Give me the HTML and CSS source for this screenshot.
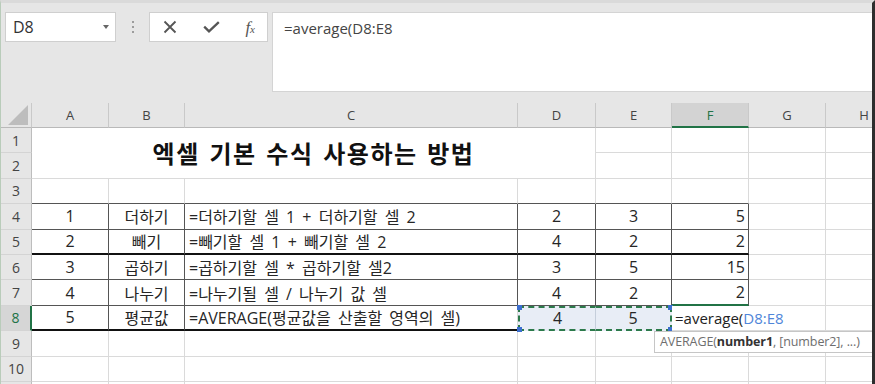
FILE: index.html
```html
<!doctype html>
<html lang="ko">
<head>
    <meta charset="UTF-8">
    <title>엑셀 기본 수식 사용하는 방법</title>
    <link rel="stylesheet" href="styles.css">
</head>
<body>

<div class="app">
    <!-- 수식 입력줄 -->
    <div class="bar">
        <div class="namebox"><span>D8</span><i class="caret"></i></div>
        <div class="grip"><i></i><i></i><i></i></div>
        <div class="btns">
            <svg width="14" height="14" viewBox="0 0 14 14"><path d="M1.5 1.5L12.5 12.5M12.5 1.5L1.5 12.5" stroke="#555" stroke-width="1.8" fill="none"/></svg>
            <svg width="17" height="12" viewBox="0 0 17 12"><path d="M1.2 5.6L6 10.4L15.8 1.2" stroke="#555" stroke-width="2.3" fill="none"/></svg>
            <span class="fx">f<sub>x</sub></span>
        </div>
        <div class="formula">=average(D8:E8</div>
    </div>

    <!-- 시트 -->
    <div class="sheet">
        <div class="h corner"><i></i></div>
        <div class="h">A</div>
        <div class="h">B</div>
        <div class="h">C</div>
        <div class="h">D</div>
        <div class="h">E</div>
        <div class="h on">F</div>
        <div class="h">G</div>
        <div class="h">H</div>

        <div class="rh">1</div>
        <div class="c title">엑셀 기본 수식 사용하는 방법</div>
        <div class="c"></div><div class="c"></div><div class="c"></div><div class="c"></div>

        <div class="rh">2</div>
        <div class="c"></div><div class="c"></div><div class="c"></div><div class="c"></div>

        <div class="rh">3</div>
        <div class="c tt"></div><div class="c tt"></div><div class="c tt"></div><div class="c tt"></div><div class="c tt"></div><div class="c tt"></div>
        <div class="c"></div><div class="c"></div>

        <div class="rh">4</div>
        <div class="c t">1</div>
        <div class="c t">더하기</div>
        <div class="c t l">=더하기할 셀 1 + 더하기할 셀 2</div>
        <div class="c t">2</div>
        <div class="c t">3</div>
        <div class="c t r">5</div>
        <div class="c"></div><div class="c"></div>

        <div class="rh">5</div>
        <div class="c t tb">2</div>
        <div class="c t tb">빼기</div>
        <div class="c t tb l">=빼기할 셀 1 + 빼기할 셀 2</div>
        <div class="c t tb">4</div>
        <div class="c t tb">2</div>
        <div class="c t tb r">2</div>
        <div class="c"></div><div class="c"></div>

        <div class="rh">6</div>
        <div class="c t">3</div>
        <div class="c t">곱하기</div>
        <div class="c t l">=곱하기할 셀 * 곱하기할 셀2</div>
        <div class="c t">3</div>
        <div class="c t">5</div>
        <div class="c t r">15</div>
        <div class="c"></div><div class="c"></div>

        <div class="rh">7</div>
        <div class="c t">4</div>
        <div class="c t">나누기</div>
        <div class="c t l">=나누기될 셀 / 나누기 값 셀</div>
        <div class="c t">4</div>
        <div class="c t">2</div>
        <div class="c t r above">2</div>
        <div class="c"></div><div class="c"></div>

        <div class="rh on">8</div>
        <div class="c t tb">5</div>
        <div class="c t tb">평균값</div>
        <div class="c t tb l cut">=AVERAGE(평균값을 산출할 영역의 셀)</div>
        <div class="c sel sl">4</div>
        <div class="c sel sr">5</div>
        <div class="c edit"><span class="typing">=average(<span class="ref">D8:E8</span></span></div>
        <div class="c"></div><div class="c"></div>

        <div class="rh">9</div>
        <div class="c"></div><div class="c"></div><div class="c"></div><div class="c"></div><div class="c"></div><div class="c"></div><div class="c"></div><div class="c"></div>

        <div class="rh">10</div>
        <div class="c"></div><div class="c"></div><div class="c"></div><div class="c"></div><div class="c"></div><div class="c"></div><div class="c"></div><div class="c"></div>

        <div class="rh"></div>
        <div class="c"></div><div class="c"></div><div class="c"></div><div class="c"></div><div class="c"></div><div class="c"></div><div class="c"></div><div class="c"></div>
    </div>

    <div class="tip">AVERAGE(<b>number1</b>, [number2], ...)</div>
</div>

</body>
</html>
```

FILE: styles.css
```css
*{margin:0;padding:0;box-sizing:border-box;}
body{
    background:#e6e6e6;
    font-family:"Open Sans","Noto Sans CJK KR",sans-serif;
}
.app{
    position:relative;
    width:875px;
    height:384px;
    overflow:hidden;
    background:#e6e6e6;
    border-left:1px solid #b9ccba;
    border-right:3px solid #2e2e2e;
    border-top:3px solid #dadada;
}

/* 수식 입력줄 */
.bar{
    display:flex;
    align-items:flex-start;
    height:100px;
    padding:9px 0 0 4px;
}
.namebox{
    display:flex;
    align-items:center;
    justify-content:space-between;
    width:111px;
    height:30px;
    padding:0 6px 0 7px;
    background:#fff;
    border:1px solid #cfcfcf;
    font-size:16px;
    color:#333;
}
.caret{
    width:0;
    height:0;
    border-left:3.5px solid transparent;
    border-right:3.5px solid transparent;
    border-top:4px solid #666;
}
.grip{
    display:flex;
    flex-direction:column;
    align-items:center;
    gap:3px;
    width:33px;
    padding-top:9px;
}
.grip i{
    width:2px;
    height:2px;
    background:#9c9c9c;
}
.btns{
    display:flex;
    align-items:center;
    justify-content:space-between;
    width:119px;
    height:30px;
    padding:0 12px 0 13px;
    background:#fff;
    border:1px solid #cfcfcf;
}
.fx{
    font-family:"Liberation Serif",serif;
    font-style:italic;
    font-size:17px;
    color:#555;
    line-height:1;
}
.fx sub{
    font-size:11px;
    vertical-align:0;
}
.formula{
    flex:1;
    height:80px;
    margin-left:4px;
    padding:5px 11px;
    background:#fff;
    border:1px solid #d4d4d4;
    border-right:0;
    font-size:15px;
    line-height:20px;
    color:#444;
}

/* 시트 */
.sheet{
    display:grid;
    grid-template-columns:31px 77px 76px 333px 78px 76px 77px 77px 77px;
    grid-template-rows:25px repeat(11,25.4px);
}
.h{
    display:flex;
    align-items:center;
    justify-content:center;
    border-right:1px solid #c9c9c9;
    border-bottom:1px solid #b9b9b9;
    font-size:13px;
    color:#444;
}
.h.on{
    background:#d3d3d3;
    color:#217346;
    border-bottom:2px solid #217346;
}
.corner{
    justify-content:flex-end;
    align-items:flex-end;
    padding:0 3px 2px 0;
}
.corner i{
    width:0;
    height:0;
    border-left:20px solid transparent;
    border-bottom:20px solid #bdbdbd;
}
.rh{
    display:flex;
    align-items:center;
    justify-content:center;
    border-right:1px solid #bdbdbd;
    border-bottom:1px solid #d4d4d4;
    font-size:14px;
    color:#444;
}
.rh.on{
    background:#d6d6d6;
    color:#217346;
    border-right:2px solid #217346;
}
.c{
    display:flex;
    align-items:center;
    justify-content:center;
    padding:0 4px;
    background:#fff;
    border-right:1px solid #dadada;
    border-bottom:1px solid #dadada;
    font-family:"Open Sans","Noto Sans CJK KR",sans-serif;
    font-size:16px;
    word-spacing:3px;
    color:#262626;
    white-space:nowrap;
}
.c.l{justify-content:flex-start;}
.c.r{justify-content:flex-end;padding-right:3px;}
.title{
    grid-column:span 4;
    grid-row:span 2;
    font-size:24px;
    font-weight:bold;
    letter-spacing:1.5px;
    word-spacing:2px;
    color:#111;
}
.tt{border-bottom-color:#555;}
.t{
    border-right-color:#555;
    border-bottom-color:#555;
}
.tb{border-bottom:2px solid #111;}
.cut{border-right-color:#dadada;}
.above{border-bottom:2px solid #217346;}

/* 선택 범위 D8:E8 */
.sel{
    position:relative;
    background:#e8edf6;
    border-top:2px dashed #2c7a4b;
    border-bottom:2px dashed #2c7a4b;
}
.sl{border-left:2px dashed #2c7a4b;border-right-color:#c5cedb;}
.sr{border-right:2px dashed #2c7a4b;}
.sel:before,.sel:after{
    content:"";
    position:absolute;
    width:5px;
    height:5px;
    background:#3c6fcf;
}
.sl:before{left:-3px;top:-3px;}
.sl:after{left:-3px;bottom:-3px;}
.sr:before{right:-3px;top:-3px;}
.sr:after{right:-3px;bottom:-3px;}

/* 편집 중인 셀 F8 */
.edit{
    position:relative;
    z-index:2;
    justify-content:flex-start;
    padding:0;
    border-right:0;
    overflow:visible;
}
.typing{
    display:flex;
    align-items:center;
    height:100%;
    padding:0 3px;
    background:#fff;
    font-size:15px;
    word-spacing:0;
    color:#222;
}
.ref{color:#4f86d9;}

.tip{
    position:absolute;
    left:653px;
    top:328px;
    width:219px;
    height:22px;
    padding:0 5px;
    background:#fff;
    border:1px solid #c6c6c6;
    font-size:12.5px;
    letter-spacing:-0.1px;
    line-height:20px;
    color:#6e6e6e;
    white-space:nowrap;
}
.tip b{color:#333;}
```
